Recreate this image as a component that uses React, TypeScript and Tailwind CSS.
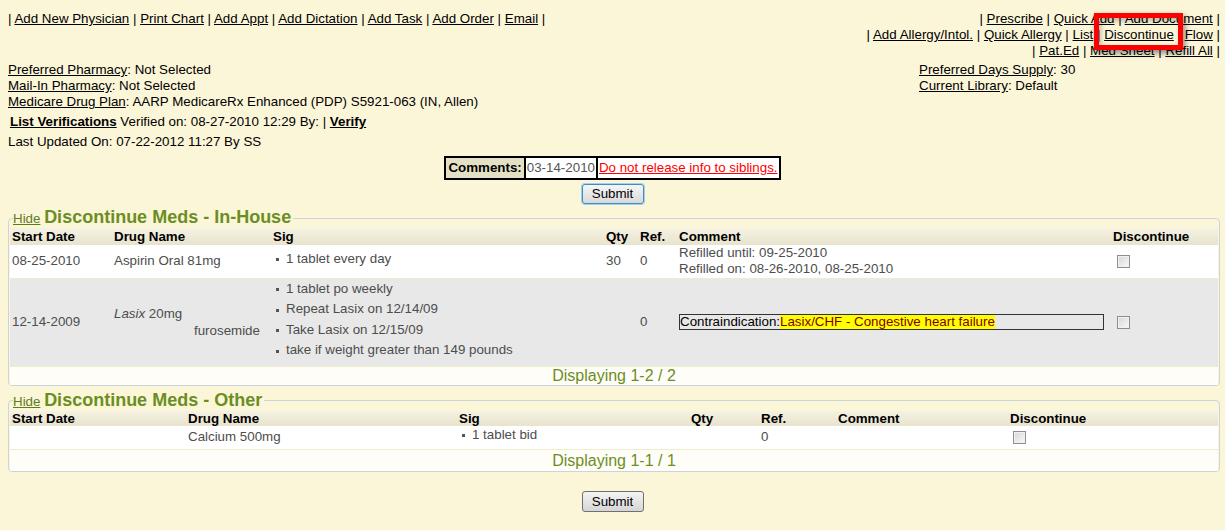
import React from "react";

// Top link bar helper: "| a | b | c |"
function LinkBar({ items }: { items: string[] }) {
  return (
    <>
      |
      {items.map((t) => (
        <React.Fragment key={t}>
          {" "}
          <a href="#" className="underline">
            {t}
          </a>{" "}
          |
        </React.Fragment>
      ))}
    </>
  );
}

function Check() {
  return (
    <span className="inline-block w-[13px] h-[13px] border border-[#8e8e8e] bg-gradient-to-br from-[#d4d6da] to-[#fafafa] shadow-[inset_0_0_0_1px_#f2f2f2] align-middle" />
  );
}

function Sig({ lines, compact }: { lines: string[]; compact?: boolean }) {
  return (
    <ul className="pb-[5px]">
      {lines.map((l) => (
        <li key={l} className={`flex items-center ${compact ? "h-[18px]" : "h-[20.5px]"}`}>
          <span className="w-[3px] h-[3px] bg-[#555] ml-[3px] mr-[7px] translate-y-[1px]" />
          {l}
        </li>
      ))}
    </ul>
  );
}

function Legend({ title }: { title: string }) {
  return (
    <legend className="ml-[3px] pr-[2px] text-[#6b8e23] leading-[18px]">
      <a href="#" className="underline text-[#5c7d1c]">
        Hide
      </a>{" "}
      <span className="text-[18px] font-bold">{title}</span>
    </legend>
  );
}

function SubmitButton({ focused }: { focused?: boolean }) {
  return (
    <button
      className={
        focused
          ? "w-[62px] h-[20px] rounded-[3px] border border-[#3c8fc4] shadow-[0_0_0_1px_#9fd0ee] bg-gradient-to-b from-[#f6f6f6] to-[#d9d9d9]"
          : "w-[62px] h-[21px] rounded-[3px] border border-[#707070] bg-gradient-to-b from-[#f4f4f4] to-[#d6d6d6]"
      }
    >
      Submit
    </button>
  );
}

const th = "text-left font-bold text-black pl-[2px] whitespace-nowrap";
const td = "pl-[2px] align-middle whitespace-nowrap";

export default function App() {
  return (
    <div className="min-h-[530px] w-[1225px] bg-[#fcf6d9] text-black text-[13.33px] leading-[16px] font-['Liberation_Sans',Arial,sans-serif] relative">
      {/* top links */}
      <div className="flex justify-between pt-[11px] pl-[8px] pr-[5px]">
        <div>
          <LinkBar items={["Add New Physician", "Print Chart", "Add Appt", "Add Dictation", "Add Task", "Add Order", "Email"]} />
        </div>
        <div className="text-right">
          <div>
            <LinkBar items={["Prescribe", "Quick Add", "Add Document"]} />
          </div>
          <div>
            <LinkBar items={["Add Allergy/Intol.", "Quick Allergy", "List", "Discontinue", "Flow"]} />
          </div>
          <div>
            <LinkBar items={["Pat.Ed", "Med Sheet", "Refill All"]} />
          </div>
        </div>
      </div>

      {/* annotation box */}
      <div className="absolute left-[1094px] top-[13px] w-[89px] h-[37px] border-[5px] border-[#ff0000] shadow-[2px_3px_6px_rgba(0,0,0,0.45),inset_2px_3px_5px_rgba(0,0,0,0.25)]" />

      {/* pharmacy info */}
      <div className="grid grid-cols-[1fr_306px] mt-[3px] pl-[8px]">
        <div>
          <div>
            <a href="#" className="underline">Preferred Pharmacy</a>: Not Selected
          </div>
          <div>
            <a href="#" className="underline">Mail-In Pharmacy</a>: Not Selected
          </div>
          <div>
            <a href="#" className="underline">Medicare Drug Plan</a>: AARP MedicareRx Enhanced (PDP) S5921-063 (IN, Allen)
          </div>
        </div>
        <div>
          <div>
            <a href="#" className="underline">Preferred Days Supply</a>: 30
          </div>
          <div>
            <a href="#" className="underline">Current Library</a>: Default
          </div>
        </div>
      </div>

      <div className="mt-[4px] pl-[10px]">
        <a href="#" className="underline font-bold">List Verifications</a> Verified on: 08-27-2010 12:29 By: |{" "}
        <a href="#" className="underline font-bold">Verify</a>
      </div>
      <div className="mt-[4px] pl-[8px]">Last Updated On: 07-22-2012 11:27 By SS</div>

      {/* comments */}
      <div className="flex justify-center mt-[6px]">
        <table className="border-2 border-black border-collapse">
          <tbody>
            <tr className="h-[22px]">
              <td className="bg-[#e4e0c3] font-bold px-[2px] border-2 border-black">Comments:</td>
              <td className="bg-white text-[#555] px-[1px] border-2 border-black">03-14-2010</td>
              <td className="bg-white px-[1px] border-2 border-black">
                <a href="#" className="underline text-[#ff0000]">Do not release info to siblings.</a>
              </td>
            </tr>
          </tbody>
        </table>
      </div>
      <div className="flex justify-center mt-[4px]">
        <SubmitButton focused />
      </div>

      {/* In-House */}
      <fieldset className="ml-[8px] mr-[5px] mt-[4px] border border-[#cbd4dd] rounded-[4px] pl-[1px]">
        <Legend title="Discontinue Meds - In-House" />
        <table className="table-fixed w-[1208px] border-collapse text-[#4d4d4d]">
          <colgroup>
            <col className="w-[102px]" />
            <col className="w-[159px]" />
            <col className="w-[333px]" />
            <col className="w-[34px]" />
            <col className="w-[39px]" />
            <col className="w-[434px]" />
            <col className="w-[107px]" />
          </colgroup>
          <thead>
            <tr className="h-[17px] bg-gradient-to-b from-[#f5f2e3] to-[#e8e3cc] leading-[15px]">
              <th className={th}>Start Date</th>
              <th className={th}>Drug Name</th>
              <th className={th}>Sig</th>
              <th className={th}>Qty</th>
              <th className={th}>Ref.</th>
              <th className={th}>Comment</th>
              <th className={th}>Discontinue</th>
            </tr>
          </thead>
          <tbody>
            <tr className="h-[33px] bg-white border-b border-[#f1ecc8]">
              <td className={td}>08-25-2010</td>
              <td className={td}>Aspirin Oral 81mg</td>
              <td className={td}>
                <Sig lines={["1 tablet every day"]} />
              </td>
              <td className={td}>30</td>
              <td className={td}>0</td>
              <td className={td}>
                <div>Refilled until: 09-25-2010</div>
                <div>Refilled on: 08-26-2010, 08-25-2010</div>
              </td>
              <td className="pl-[6px] align-middle">
                <Check />
              </td>
            </tr>
            <tr className="h-[87px] bg-[#e8e8e8] border-b border-[#f1ecc8]">
              <td className={td}>12-14-2009</td>
              <td className={td}>
                <div className="leading-[17px]">
                  <i>Lasix</i> 20mg
                </div>
                <div className="leading-[17px] pl-[80px]">furosemide</div>
              </td>
              <td className={td}>
                <Sig lines={["1 tablet po weekly", "Repeat Lasix on 12/14/09", "Take Lasix on 12/15/09", "take if weight greater than 149 pounds"]} />
              </td>
              <td className={td}></td>
              <td className={td}>0</td>
              <td className={td}>
                <div className="w-[425px] h-[16px] border border-[#333] text-black leading-[14px] flex">
                  Contraindication:
                  <span className="bg-[#ffff00] text-[#800000]">Lasix/CHF - Congestive heart failure</span>
                </div>
              </td>
              <td className="pl-[6px] align-middle">
                <Check />
              </td>
            </tr>
            <tr className="h-[18px] bg-[#fffdf8]">
              <td colSpan={7} className="text-center text-[16px] text-[#6b8e23] leading-[18px]">
                Displaying 1-2 / 2
              </td>
            </tr>
          </tbody>
        </table>
      </fieldset>

      {/* Other */}
      <fieldset className="ml-[8px] mr-[5px] mt-[5px] border border-[#cbd4dd] rounded-[4px] pl-[1px]">
        <Legend title="Discontinue Meds - Other" />
        <table className="table-fixed w-[1208px] border-collapse text-[#4d4d4d]">
          <colgroup>
            <col className="w-[176px]" />
            <col className="w-[271px]" />
            <col className="w-[232px]" />
            <col className="w-[70px]" />
            <col className="w-[77px]" />
            <col className="w-[172px]" />
            <col className="w-[210px]" />
          </colgroup>
          <thead>
            <tr className="h-[15px] bg-gradient-to-b from-[#f5f2e3] to-[#e8e3cc] leading-[15px]">
              <th className={th}>Start Date</th>
              <th className={th}>Drug Name</th>
              <th className={th}>Sig</th>
              <th className={th}>Qty</th>
              <th className={th}>Ref.</th>
              <th className={th}>Comment</th>
              <th className={th}>Discontinue</th>
            </tr>
          </thead>
          <tbody>
            <tr className="h-[23px] bg-white border-b border-[#f1ecc8]">
              <td className={td}></td>
              <td className={td}>Calcium 500mg</td>
              <td className={td}>
                <Sig compact lines={["1 tablet bid"]} />
              </td>
              <td className={td}></td>
              <td className={td}>0</td>
              <td className={td}></td>
              <td className="pl-[5px] align-middle">
                <Check />
              </td>
            </tr>
            <tr className="h-[22px] bg-[#fffdf8]">
              <td colSpan={7} className="text-center text-[16px] text-[#6b8e23] leading-[19px]">
                Displaying 1-1 / 1
              </td>
            </tr>
          </tbody>
        </table>
      </fieldset>

      <div className="flex justify-center mt-[19px] pb-[18px]">
        <SubmitButton />
      </div>
    </div>
  );
}
